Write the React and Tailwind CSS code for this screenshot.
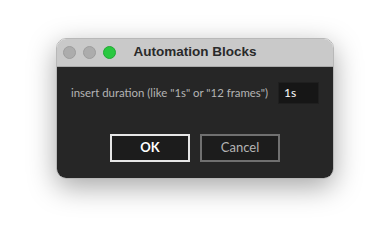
export default function App() {
  return (
    <div className="min-h-screen bg-white pt-[38px] pl-[56px]">
      <div className="w-[278px] rounded-[10px] overflow-hidden shadow-[0_8px_28px_rgba(0,0,0,0.35)] border border-[#b8b8b8]">
        <div className="relative h-[28px] bg-[#c9c9c9] flex items-center pl-[6px] gap-[7px] border-b border-[#aaaaaa]">
          <span className="w-[13px] h-[13px] rounded-full bg-[#acacac] border border-[#9d9d9d]" />
          <span className="w-[13px] h-[13px] rounded-full bg-[#acacac] border border-[#9d9d9d]" />
          <span className="w-[13px] h-[13px] rounded-full bg-[#2ac840] border border-[#22a834]" />
          <div className="absolute inset-0 flex items-center justify-center font-['Liberation_Sans',sans-serif] font-bold text-[13.5px] text-[#2a2a2a]">
            Automation Blocks
          </div>
        </div>
        <div className="bg-[#262626] px-[14px] pt-[15px] pb-[16px] font-['Lato',sans-serif]">
          <div className="flex items-center justify-between">
            <span className="whitespace-nowrap text-[11.4px] text-[#b4b4b4]">insert duration (like "1s" or "12 frames")</span>
            <div className="shrink-0 w-[41px] h-[22px] bg-[#161616] border border-[#1f1f1f] text-[12px] text-white flex items-center pl-[5px]">
              1s
            </div>
          </div>
          <div className="flex justify-center gap-[10px] mt-[30px]">
            <button className="w-[80px] h-[28px] bg-[#1c1c1c] border-2 border-[#e6e6e6] text-[13px] font-bold text-white">
              OK
            </button>
            <button className="w-[80px] h-[28px] bg-[#1c1c1c] border-2 border-[#707070] text-[13px] text-[#b4b4b4]">
              Cancel
            </button>
          </div>
        </div>
      </div>
    </div>
  );
}
